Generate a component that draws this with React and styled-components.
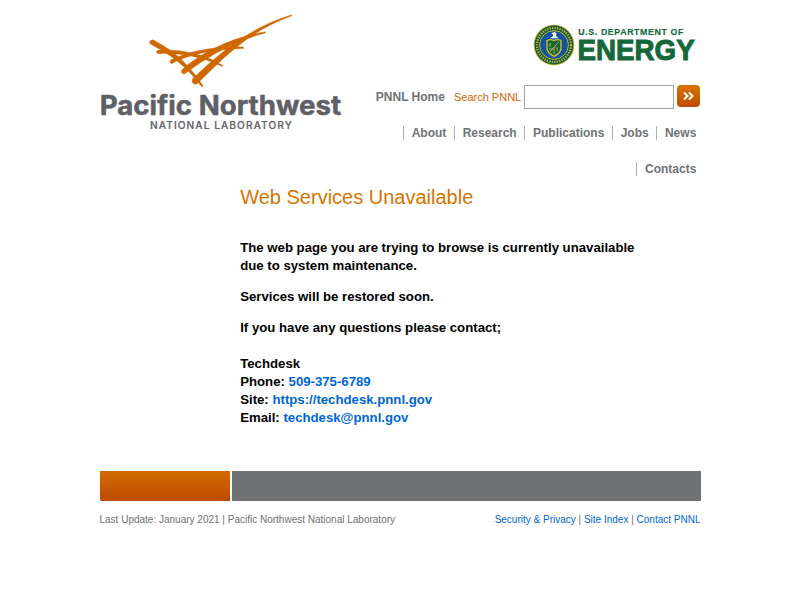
import React from "react";
import styled, { createGlobalStyle } from "styled-components";

const Global = createGlobalStyle`
  * { box-sizing: border-box; }
  body { margin: 0; background: #fff; font-family: "Liberation Sans", Arial, sans-serif; }
`;

const Page = styled.div`
  width: 601px;
  margin: 0 auto;
`;

const Header = styled.header`
  display: flex;
  justify-content: space-between;
  height: 182px;
  padding-left: 0.5px;
`;

const LabLogo = styled.svg`
  display: block;
  flex: none;
  width: 242px;
  height: 122px;
  margin-top: 10px;
  overflow: visible;
`;

const HeaderRight = styled.div`
  width: 330px;
  padding-top: 22px;
  display: flex;
  flex-direction: column;
  align-items: flex-end;
`;

const EnergyLogo = styled.svg`
  display: block;
  flex: none;
  width: 166px;
  height: 46px;
  margin-right: 2.5px;
  overflow: visible;
`;

const SearchRow = styled.form`
  display: flex;
  align-items: flex-start;
  margin-top: 17px;
  padding-right: 0.5px;
  white-space: nowrap;
`;

const HomeLink = styled.a`
  font: bold 12px/24px "Liberation Sans", Arial, sans-serif;
  color: #707276;
  margin-right: 9px;
`;

const SearchLabel = styled.label`
  font-size: 11px;
  line-height: 24px;
  color: #d06800;
  margin-right: 2.8px;
`;

const SearchInput = styled.input`
  width: 150px;
  height: 24px;
  border: 1px solid #a5a5a9;
  padding: 2px;
  margin: 0 3px 0 0;
  outline: none;
`;

const SearchButton = styled.button`
  display: flex;
  align-items: center;
  justify-content: center;
  width: 23px;
  height: 22px;
  padding: 0;
  border: 0;
  border-radius: 4px;
  background: linear-gradient(#d57500, #c04b00);
`;

const Nav = styled.nav`
  display: flex;
  flex-wrap: wrap;
  justify-content: flex-end;
  width: 310px;
  margin-top: 17px;
  padding-right: 4.2px;
  row-gap: 22px;
`;

const NavLink = styled.a`
  font-size: 12px;
  font-weight: bold;
  line-height: 14px;
  height: 14px;
  color: #707276;
  border-left: 1px solid #b0b0b4;
  padding-left: 8px;
  margin-left: 7.3px;
`;

const Content = styled.main`
  margin-left: 140.7px;
  width: 420px;
  height: 289px;
  font-size: 13.2px;
  font-weight: bold;
  line-height: 18px;
  color: #000;
`;

const Title = styled.h1`
  margin: 0 0 30px;
  padding-top: 4px;
  font-size: 20px;
  line-height: 23px;
  font-weight: normal;
  color: #d57500;
`;

const Message = styled.p`
  margin: 0 0 ${(p) => p.$gap || 13}px;
`;

const Link = styled.a`
  color: #0066d6;
  text-decoration: none;
`;

const FooterBar = styled.div`
  display: flex;
  gap: 2px;
  height: 30px;
  padding-left: 0.5px;
  margin-right: -0.5px;
`;

const OrangeBlock = styled.div`
  width: 130px;
  background: linear-gradient(#d06b00, #c04b00);
  border-bottom-left-radius: 2px;
`;

const GrayBlock = styled.div`
  flex: 1;
  background: #707276;
`;

const FooterText = styled.footer`
  display: flex;
  justify-content: space-between;
  margin-top: 12px;
  font-size: 10px;
  line-height: 14px;
  color: #707070;
`;

const strands = [
  "M150.6 44.2 C158 48 168 54 176 60 C186 68 194 77 201.8 86.8 L203.2 86 C197 76 190 68 181 59 C174 52 163 45 154 40.2 C150.5 38.6 148.5 42.5 150.6 44.2Z",
  "M158.5 53.7 C176 52.7 201 55.5 222 66.6 L222.8 65.4 C203 53 180 49.2 159 50 C155.8 50.2 156 53.6 158.5 53.7Z",
  "M172.7 63.2 C189 54.4 216 49 243.5 48.5 L243.5 47 C217 45.6 190 50.6 171.3 59.8 C168.8 61.4 170.2 64.2 172.7 63.2Z",
  "M185.5 73.3 C205 58.5 234 41 265.5 33 L265.5 31.8 C232 37 202 52.3 182.4 69.2 C179.7 72 182.7 75.2 185.5 73.3Z",
  "M197.8 83.2 C222 60 247 32 291.8 15.8 L291.6 14.7 C248 28 218 54.5 192.8 78.6 C190.2 81.8 194.5 86.3 197.8 83.2Z",
];

function PacificNorthwestLogo() {
  return (
    <LabLogo viewBox="100 10 242 122" role="img" aria-label="Pacific Northwest National Laboratory">
      <g fill="#d06800" stroke="#d06800" strokeWidth=".3">
        {strands.map((d) => <path key={d} d={d} />)}
      </g>
      <g fill="#5f6066" stroke="#5f6066" fontFamily="Inter, sans-serif">
        <text transform="translate(99.7 115.2) scale(1.085 1)" fontSize="26.8" fontWeight="700" textLength="222.6" lengthAdjust="spacingAndGlyphs" strokeWidth=".5">Pacific Northwest</text>
        <text x="150" y="128.9" fontSize="10.2" fontWeight="500" textLength="141.8" strokeWidth=".2">NATIONAL LABORATORY</text>
      </g>
    </LabLogo>
  );
}

function DepartmentOfEnergyLogo() {
  return (
    <EnergyLogo viewBox="532 22 166 46" role="img" aria-label="U.S. Department of Energy">
      <circle cx="554" cy="45" r="20.3" fill="#c5b52d" />
      <circle cx="554" cy="45" r="19.4" fill="#14592f" />
      <circle cx="554" cy="45" r="17" fill="none" stroke="#b2ad50" strokeWidth="2.4" strokeDasharray="1.4 1.1" />
      <circle cx="554" cy="45" r="14.4" fill="#1354a0" stroke="#c5b52d" strokeWidth="1" />
      <path d="M547 40.5 Q550.5 38.6 554 40.5 Q557.5 38.6 561 40.5 V49 C560 53 557 55 554 56.4 C551 55 548 53 547 49Z" fill="#176634" stroke="#d3bd3e" strokeWidth="1.3" />
      <path d="M550 52 L558.5 42 M554 47 V54 M550 43 V47 M557 47 V51 M549 49 H553" stroke="#b8ad58" strokeWidth="1" fill="none" />
      <path d="M551.2 33.6 L554.8 31.8 L556.4 33.6 L556 36 L558.8 38.3 H549.8 L553 36.3 V34.5Z" fill="#fff" />
      <g fill="#14683a" stroke="#14683a" fontFamily="'Liberation Sans', Arial, sans-serif" fontWeight="700">
        <text x="578.3" y="35" fontSize="8.8" textLength="105" strokeWidth=".15">U.S. DEPARTMENT OF</text>
        <text x="577.5" y="60.4" fontSize="30" strokeWidth="1" textLength="117.2" lengthAdjust="spacingAndGlyphs">ENERGY</text>
      </g>
    </EnergyLogo>
  );
}

export default function App() {
  return (
    <>
      <Global />
      <Page>
        <Header>
          <PacificNorthwestLogo />
          <HeaderRight>
            <DepartmentOfEnergyLogo />
            <SearchRow>
              <HomeLink>PNNL Home</HomeLink>
              <SearchLabel htmlFor="search">Search PNNL</SearchLabel>
              <SearchInput id="search" />
              <SearchButton type="button" aria-label="Search">
                <svg width="11" height="10" viewBox="0 0 11 10" fill="none" stroke="#fff" strokeWidth="2">
                  <path d="M1 1.5 L4.5 5 L1 8.5 M6 1.5 L9.5 5 L6 8.5" />
                </svg>
              </SearchButton>
            </SearchRow>
            <Nav>
              <NavLink>About</NavLink>
              <NavLink>Research</NavLink>
              <NavLink>Publications</NavLink>
              <NavLink>Jobs</NavLink>
              <NavLink>News</NavLink>
              <NavLink>Contacts</NavLink>
            </Nav>
          </HeaderRight>
        </Header>
        <Content>
          <Title>Web Services Unavailable</Title>
          <Message>The web page you are trying to browse is currently unavailable<br />due to system maintenance.</Message>
          <Message>Services will be restored soon.</Message>
          <Message $gap={18}>If you have any questions please contact;</Message>
          <Message>
            Techdesk<br />
            Phone: <Link>509-375-6789</Link><br />
            Site: <Link>https://techdesk.pnnl.gov</Link><br />
            Email: <Link>techdesk@pnnl.gov</Link>
          </Message>
        </Content>
        <FooterBar>
          <OrangeBlock />
          <GrayBlock />
        </FooterBar>
        <FooterText>
          <span>Last Update: January 2021 | Pacific Northwest National Laboratory</span>
          <span><Link>Security &amp; Privacy</Link> | <Link>Site Index</Link> | <Link>Contact PNNL</Link></span>
        </FooterText>
      </Page>
    </>
  );
}
